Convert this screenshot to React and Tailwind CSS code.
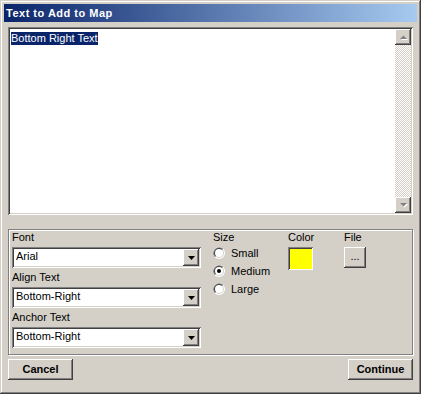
const raised =
  "shadow-[inset_-1px_-1px_#404040,inset_1px_1px_#ffffff,inset_-2px_-2px_#808080,inset_2px_2px_#d4d0c8]";
const sunken =
  "shadow-[inset_1px_1px_#808080,inset_-1px_-1px_#ffffff,inset_2px_2px_#404040,inset_-2px_-2px_#d4d0c8]";

function Combo({ value }) {
  return (
    <div className={`h-[21px] w-[189px] bg-white p-[2px] flex ${sunken}`}>
      <div className="flex-1 pl-[2px] pt-[1px] leading-[13px]">{value}</div>
      <div className={`w-[16px] h-[17px] bg-[#d4d0c8] flex items-center justify-center ${raised}`}>
        <svg width="7" height="4" viewBox="0 0 7 4">
          <polygon points="0,0 7,0 3.5,4" fill="#000" />
        </svg>
      </div>
    </div>
  );
}

function ScrollArrow({ up }) {
  return (
    <div className={`w-[16px] h-[16px] bg-[#d4d0c8] flex items-center justify-center ${raised}`}>
      <svg width="9" height="6" viewBox="0 0 9 6">
        {up ? (
          <>
            <polygon points="1,5 8,5 4.5,1.5" fill="#fff" transform="translate(1,1)" />
            <polygon points="1,5 8,5 4.5,1.5" fill="#808080" />
          </>
        ) : (
          <>
            <polygon points="1,1 8,1 4.5,4.5" fill="#fff" transform="translate(1,1)" />
            <polygon points="1,1 8,1 4.5,4.5" fill="#808080" />
          </>
        )}
      </svg>
    </div>
  );
}

function Radio({ label, checked }) {
  return (
    <div className="h-[18px] flex items-start gap-[6px]">
      <svg width="12" height="12" viewBox="0 0 12 12">
        <circle cx="6" cy="6" r="6" fill="#fff" />
        <path d="M1.76 10.24 A6 6 0 0 1 10.24 1.76 Z" fill="#808080" />
        <circle cx="6" cy="6" r="5" fill="#d4d0c8" />
        <path d="M2.46 9.54 A5 5 0 0 1 9.54 2.46 Z" fill="#404040" />
        <circle cx="6" cy="6" r="4" fill="#fff" />
        {checked && <circle cx="6" cy="6" r="2" fill="#000" />}
      </svg>
      <span className="leading-[13px]">{label}</span>
    </div>
  );
}

export default function App() {
  return (
    <div
      className={`w-[421px] h-[394px] bg-[#d4d0c8] p-[4px] flex flex-col text-[11px] text-black font-['Liberation_Sans',Arial,sans-serif] ${"shadow-[inset_-1px_-1px_#404040,inset_1px_1px_#d4d0c8,inset_-2px_-2px_#808080,inset_2px_2px_#ffffff]"}`}
    >
      <div className="h-[18px] px-[2px] flex items-center bg-[linear-gradient(to_right,#0a246a,#a6caf0)] text-white font-bold text-[11px] tracking-[0.5px]">
        Text to Add to Map
      </div>

      <div className="flex-1 px-[4px] pt-[5px] flex flex-col">
        {/* text area */}
        <div className={`h-[188px] bg-white p-[2px] flex ${sunken}`}>
          <div className="flex-1 pl-[1px] pt-[1px]">
            <span className="inline-block bg-[#0a246a] text-white leading-[13px]">Bottom Right Text</span>
          </div>
          <div className="w-[16px] flex flex-col">
            <ScrollArrow up />
            <div className="flex-1 bg-[repeating-conic-gradient(#d4d0c8_0%_25%,#ffffff_0%_50%)] bg-[length:2px_2px]" />
            <ScrollArrow />
          </div>
        </div>

        {/* options group */}
        <div className="mt-[14px] h-[126px] border border-[#808080] shadow-[inset_1px_1px_#ffffff,1px_1px_#ffffff] pl-[3px] pt-[1px] flex">
          <div className="w-[189px] flex flex-col">
            <div className="leading-[13px] pb-[3px]">Font</div>
            <Combo value="Arial" />
            <div className="leading-[13px] pt-[3px] pb-[3px]">Align Text</div>
            <Combo value="Bottom-Right" />
            <div className="leading-[13px] pt-[3px] pb-[3px]">Anchor Text</div>
            <Combo value="Bottom-Right" />
          </div>

          <div className="ml-[12px] w-[75px] flex flex-col">
            <div className="leading-[13px] pb-[3px]">Size</div>
            <Radio label="Small" />
            <Radio label="Medium" checked />
            <Radio label="Large" />
          </div>

          <div className="w-[56px] flex flex-col">
            <div className="leading-[13px] pb-[3px]">Color</div>
            <div className={`w-[25px] h-[23px] bg-[#ffff00] ${"shadow-[inset_1px_1px_#808080,inset_-1px_-1px_#ffffff,inset_2px_2px_#404040]"}`} />
          </div>

          <div className="flex flex-col">
            <div className="leading-[13px] pb-[3px]">File</div>
            <button className={`w-[22px] h-[21px] bg-[#d4d0c8] leading-[13px] pb-[2px] ${raised}`}>...</button>
          </div>
        </div>

        {/* buttons */}
        <div className="mt-[4px] flex justify-between">
          <button className={`w-[65px] h-[21px] bg-[#d4d0c8] font-bold ${raised}`}>Cancel</button>
          <button className={`w-[65px] h-[21px] bg-[#d4d0c8] font-bold ${raised}`}>Continue</button>
        </div>
      </div>
    </div>
  );
}
